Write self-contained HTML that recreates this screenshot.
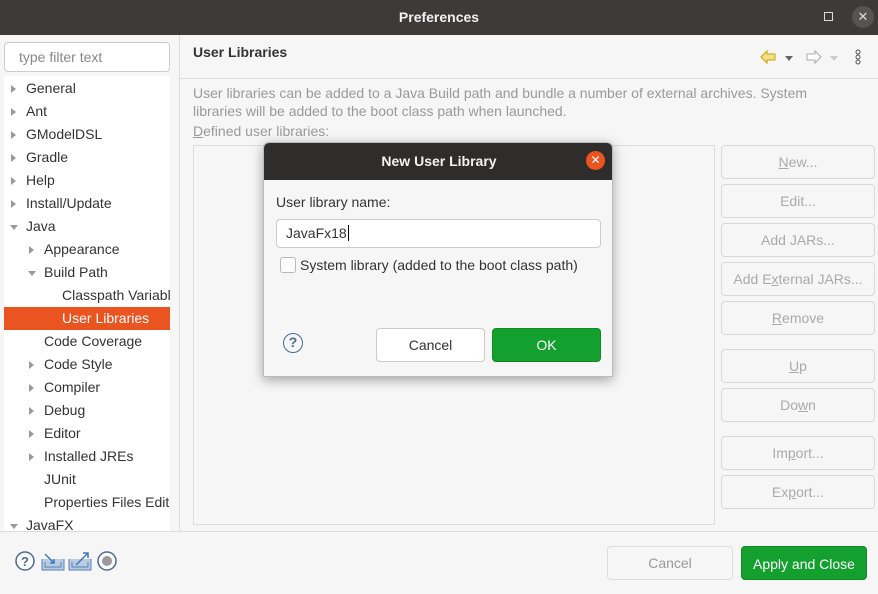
<!DOCTYPE html><html><head><style>
*{box-sizing:border-box;margin:0;padding:0}
body{width:878px;height:594px;overflow:hidden;background:#f6f6f6;font-family:"Liberation Sans","DejaVu Sans",sans-serif;font-size:14px;color:#333;position:relative}
.a{position:absolute}
.title{left:0;top:0;width:878px;height:35px;background:#3d3a38;color:#f2f2f2;font-weight:bold;text-align:center;line-height:35px;font-size:14px}
.tree div{position:absolute;white-space:nowrap;height:23px;line-height:23px}
.ar{position:absolute;width:0;height:0;border-top:4px solid transparent;border-bottom:4px solid transparent;border-left:5px solid #999}
.ad{position:absolute;width:0;height:0;border-left:4px solid transparent;border-right:4px solid transparent;border-top:5px solid #999}
.rb{position:absolute;left:721px;width:154px;height:34px;border:1px solid #d8d8d8;border-radius:4px;background:#f6f6f6;color:#aaa;text-align:center;line-height:32px}
.btn{position:absolute;border-radius:4px;text-align:center}
</style></head><body>
<div class="a title">Preferences</div>
<div class="a" style="left:824px;top:12px;width:9px;height:9px;border:1px solid #ddd"></div>
<div class="a" style="left:852px;top:6px;width:22px;height:22px;border-radius:50%;background:#57534f;color:#ddd;text-align:center;line-height:22px;font-size:13px">✕</div>
<div class="a" style="left:4px;top:42px;width:166px;height:30px;border:1px solid #ccc;border-radius:4px;background:#fff;color:#888;padding-left:14px;line-height:28px">type filter text</div>
<div class="a" style="left:4px;top:76px;width:166px;height:456px;background:#fff"></div>
<div class="a" style="left:179px;top:35px;width:1px;height:497px;background:#ddd"></div>
<div class="a tree" style="left:0;top:0;width:170px;height:532px;overflow:hidden">
<div style="left:26px;top:77px">General</div><span class="ar" style="left:11px;top:85px"></span>
<div style="left:26px;top:100px">Ant</div><span class="ar" style="left:11px;top:108px"></span>
<div style="left:26px;top:123px">GModelDSL</div><span class="ar" style="left:11px;top:131px"></span>
<div style="left:26px;top:146px">Gradle</div><span class="ar" style="left:11px;top:154px"></span>
<div style="left:26px;top:169px">Help</div><span class="ar" style="left:11px;top:177px"></span>
<div style="left:26px;top:192px">Install/Update</div><span class="ar" style="left:11px;top:200px"></span>
<div style="left:26px;top:215px">Java</div><span class="ad" style="left:10px;top:225px"></span>
<div style="left:44px;top:238px">Appearance</div><span class="ar" style="left:29px;top:246px"></span>
<div style="left:44px;top:261px">Build Path</div><span class="ad" style="left:28px;top:271px"></span>
<div style="left:62px;top:284px">Classpath Variables</div>
<div style="left:4px;top:307px;width:166px;background:#e95420;color:#fff;padding-left:58px">User Libraries</div>
<div style="left:44px;top:330px">Code Coverage</div>
<div style="left:44px;top:353px">Code Style</div><span class="ar" style="left:29px;top:361px"></span>
<div style="left:44px;top:376px">Compiler</div><span class="ar" style="left:29px;top:384px"></span>
<div style="left:44px;top:399px">Debug</div><span class="ar" style="left:29px;top:407px"></span>
<div style="left:44px;top:422px">Editor</div><span class="ar" style="left:29px;top:430px"></span>
<div style="left:44px;top:445px">Installed JREs</div><span class="ar" style="left:29px;top:453px"></span>
<div style="left:44px;top:468px">JUnit</div>
<div style="left:44px;top:491px">Properties Files Editor</div>
<div style="left:26px;top:514px">JavaFX</div><span class="ad" style="left:10px;top:524px"></span>
</div>
<div class="a" style="left:193px;top:44px;font-weight:bold;font-size:14px">User Libraries</div>
<div class="a" style="left:180px;top:78px;width:698px;height:1px;background:#ddd"></div>
<svg class="a" style="left:758px;top:48px" width="110" height="20"><path d="M3 9 L9 3 V6 H17 V12 H9 V15 Z" fill="#f5e08a" stroke="#c9a200"/><path d="M27 8 H35 L31 13Z" fill="#666"/><path d="M63 9 L57 3 V6 H49 V12 H57 V15 Z" fill="#fff" stroke="#aaa"/><path d="M72 8 H80 L76 13Z" fill="#ccc"/><circle cx="100" cy="4" r="2" fill="none" stroke="#555"/><circle cx="100" cy="9" r="2" fill="none" stroke="#555"/><circle cx="100" cy="14" r="2" fill="none" stroke="#555"/></svg>
<div class="a" style="left:193px;top:84px;width:660px;color:#999;line-height:18px">User libraries can be added to a Java Build path and bundle a number of external archives. System libraries will be added to the boot class path when launched.</div>
<div class="a" style="left:193px;top:123px;color:#999"><u>D</u>efined user libraries:</div>
<div class="a" style="left:193px;top:145px;width:522px;height:380px;border:1px solid #ddd;background:#f6f6f6"></div>
<div class="rb" style="top:145px"><u>N</u>ew...</div>
<div class="rb" style="top:184px">Edit...</div>
<div class="rb" style="top:223px">Add JARs...</div>
<div class="rb" style="top:262px">Add E<u>x</u>ternal JARs...</div>
<div class="rb" style="top:301px"><u>R</u>emove</div>
<div class="rb" style="top:349px"><u>U</u>p</div>
<div class="rb" style="top:388px">Do<u>w</u>n</div>
<div class="rb" style="top:436px">Im<u>p</u>ort...</div>
<div class="rb" style="top:475px">Ex<u>p</u>ort...</div>
<div class="a" style="left:0;top:531px;width:878px;height:1px;background:#ddd"></div>
<svg class="a" style="left:14px;top:550px" width="106" height="22"><circle cx="11" cy="11" r="9" fill="#fff" stroke="#4a6a96" stroke-width="1.5"/><text x="11" y="16" text-anchor="middle" font-size="13" font-weight="bold" fill="#4a6a96" font-family="Liberation Sans">?</text><path d="M28 9 V20 H50 V9 M31 12 V17 H47 V12" fill="#b8cce4" stroke="#5a80b0"/><path d="M31 4 L40 13 M36 13 H40 V9" stroke="#3d7ab8" stroke-width="1.5" fill="none"/><path d="M55 9 V20 H77 V9 M58 12 V17 H74 V12" fill="#b8cce4" stroke="#5a80b0"/><path d="M62 15 L74 3 M69 3 H74 V8" stroke="#3d7ab8" stroke-width="1.5" fill="none"/><circle cx="93" cy="11" r="9" fill="#fff" stroke="#4a6a96" stroke-width="1.5"/><circle cx="93" cy="11" r="5" fill="#999"/></svg>
<div class="btn" style="left:607px;top:546px;width:126px;height:34px;border:1px solid #ddd;color:#999;line-height:32px">Cancel</div>
<div class="btn" style="left:741px;top:546px;width:126px;height:34px;background:#13a02e;color:#fff;line-height:34px;border:1px solid #0f8a26">Apply and Close</div>
<div class="a" style="left:263px;top:142px;width:350px;height:235px;background:#f6f6f6;border:1px solid #bbb;border-radius:6px 6px 0 0;box-shadow:0 3px 12px rgba(0,0,0,.35);overflow:hidden">
<div class="a" style="left:0;top:0;width:350px;height:37px;background:#2f2d2c;color:#f2f2f2;font-weight:bold;text-align:center;line-height:37px">New User Library</div>
<div class="a" style="left:322px;top:8px;width:19px;height:19px;border-radius:50%;background:#e95420;color:#fff;text-align:center;line-height:19px;font-size:12px">✕</div>
<div class="a" style="left:12px;top:51px">User library name:</div>
<div class="a" style="left:12px;top:76px;width:325px;height:29px;border:1px solid #ccc;border-radius:4px;background:#fff;padding-left:9px;line-height:27px">JavaFx18<span style="border-left:1px solid #000;margin-left:1px"></span></div>
<div class="a" style="left:16px;top:114px;width:16px;height:16px;border:1px solid #bbb;border-radius:3px;background:#fff"></div>
<div class="a" style="left:36px;top:114px">System library (added to the boot class path)</div>
<div class="a" style="left:19px;top:190px;width:20px;height:20px;border-radius:50%;border:1.5px solid #4a6a96;color:#4a6a96;text-align:center;line-height:17px;font-weight:bold">?</div>
<div class="btn" style="left:112px;top:185px;width:109px;height:34px;border:1px solid #ccc;background:#fff;line-height:32px">Cancel</div>
<div class="btn" style="left:228px;top:185px;width:109px;height:34px;background:#13a02e;border:1px solid #0f8a26;color:#fff;line-height:32px">OK</div>
</div>
</body></html>
